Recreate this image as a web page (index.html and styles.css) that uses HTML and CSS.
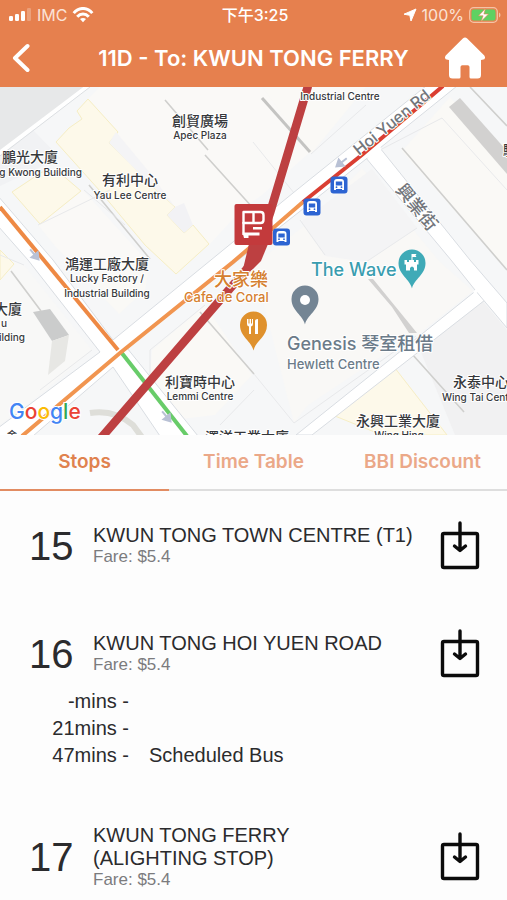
FILE: index.html
```html
<!DOCTYPE html>
<html lang="en">
<head>
<meta charset="utf-8">
<meta name="viewport" content="width=device-width, initial-scale=1">
<title>11D - To: KWUN TONG FERRY</title>
<link rel="stylesheet" href="styles.css">
</head>
<body>
<header class="header">
  <div class="status">
    <div class="status-left">
      <svg class="signal" width="23" height="14" viewBox="0 0 23 14" aria-hidden="true">
        <rect x="0" y="8" width="4" height="5" rx="1.3" fill="#fff"/>
        <rect x="6" y="6" width="4" height="7" rx="1.3" fill="#fff"/>
        <rect x="12" y="3" width="4" height="10" rx="1.3" fill="#fff"/>
        <rect x="18" y="0" width="4" height="13" rx="1.3" fill="#fff" opacity=".25"/>
      </svg>
      <span>IMC</span>
      <svg width="22" height="16" viewBox="0 0 22 16" aria-hidden="true" fill="none" stroke="#fff" stroke-width="3">
        <path d="M1.7 6.1C7-.1 15-.1 20.300 6.100"/>
        <path d="M5.200 9.700c3.400-3.700 8.200-3.700 11.600 0"/>
        <path d="M11 15.300l-3-3.200c1.700-1.600 4.300-1.600 6 0z" fill="#fff" stroke="none"/>
      </svg>
    </div>
    <div class="status-time">下午3:25</div>
    <div class="status-right">
      <svg width="14" height="14" viewBox="0 0 14 14" aria-hidden="true"><path d="M13 1 8 13 6.800 7.300 1 6.200z" fill="#fff" stroke="#fff" stroke-linejoin="round"/></svg>
      <span>100%</span>
      <svg width="32" height="16" viewBox="0 0 32 16" aria-hidden="true">
        <rect x=".7" y=".7" width="27.600" height="14.600" rx="4" fill="none" stroke="#f5c3a6" stroke-width="1.300"/>
        <rect x="2.500" y="2.500" width="24" height="11" rx="2.200" fill="#5fd162"/>
        <path d="M30 5.500v5c2-1 2-4 0-5z" fill="#f5c3a6"/>
        <path d="M16.500 1.500 9.500 8.800h4.600L12 14.500l7.500-7.500h-4.600z" fill="#fff" stroke="#e6804e" stroke-width=".6"/>
      </svg>
    </div>
  </div>
  <div class="navbar">
    <button class="back" type="button" aria-label="Back">
      <svg width="18" height="30" viewBox="0 0 18 30" aria-hidden="true"><path d="M15.500 3 3 15l12.500 12" fill="none" stroke="#fff" stroke-width="4" stroke-linecap="round" stroke-linejoin="round"/></svg>
    </button>
    <h1 class="title">11D - To: KWUN TONG FERRY</h1>
    <a class="home" href="#home" aria-label="Home">
      <svg width="42" height="42" viewBox="0 0 42 42" aria-hidden="true"><path d="M18.800 1.600q2.200-2 4.400 0L40.300 18.500q2.200 3.600-2 4.300L37 23v15q0 3.500-3.500 3.500H27q-1.500 0-1.500-1.500V30q0-1.800-1.800-1.800h-5.400q-1.800 0-1.800 1.800v10q0 1.500-1.500 1.500H8.500Q5 41.500 5 38V23l-1.300-.2q-4.200-.7-2-4.300z" fill="#fff"/></svg>
    </a>
  </div>
</header>

<main>
  <svg class="map" viewBox="0 87 507 348" role="img" aria-label="Route map">
    <defs>
      <g id="bus-stop">
        <rect x="-8.500" y="-8.500" width="17" height="17" rx="3" fill="#2d64d2"/>
        <path d="M-5 5V-3Q-5-6-2-6H2Q5-6 5-3V5H3V4H-3V5z" fill="#fff"/>
        <rect x="-3.200" y="-3.500" width="6.400" height="4" fill="#2d64d2"/>
        <circle cx="-2.500" cy="2.200" r=".9" fill="#2d64d2"/><circle cx="2.500" cy="2.200" r=".9" fill="#2d64d2"/>
      </g>
      <path id="pin" d="M0 19.500C-2 10-13.500 6-13.500-6a13.500 13.500 0 0 1 27 0C13.500 6 2 10 0 19.500z"/>
      <path id="arrow" d="M-6 0H1V-4L7 0 1 4V0"/>
    </defs>
    <rect y="87" width="507" height="348" fill="#f6f7f8"/>

    <g>
      <path d="M0 87H84L0 153z" fill="#e7e8e9"/>
      <path d="M36 128 0 157V186L60 158 33 130z" fill="#f1f2f4"/>
      <path d="M100 87H262L310 152 262 195 243 208 209 245 100 160 88 99z" fill="#faf9f7"/>
      <path d="M38 225 83 190 148 262 113 306 55 246z" fill="#faf9f7"/>
      <path d="M262 87H366L311 154z" fill="#faf9f6"/>
      <path d="M402 151 450 97 507 160V270z" fill="#faf9f6"/>
      <path d="M254 265 318 215 362 168 440 262 473 291 416 336 385 354 308 405 294 423z" fill="#f9f8f6"/>
      <path d="M301 222 372 169 417 228 366 262 325 256z" fill="#f4f4f5"/>
      <path d="M418 345 480 298 507 330V435H455z" fill="#f1f1f2"/>
      <path d="M0 257 24 265 92 350 45 391 0 425z" fill="#f8f8f7"/>
      <path d="M152 350 205 305 252 375 215 415 172 420 150 385z" fill="#faf9f6"/>
      <path d="M78 270 150 262 145 290 119 314z" fill="#faf9f6"/>
    </g>
    <g fill="#fdf9ea" stroke="#f6eec4" stroke-width="1">
      <path d="M88 99 118 132 109 143 130 163 150 184 175 207 167 215 184 233 193 225 209 244 176 274 145 245 100 191 56 142 69 128 82 119 77 111z"/>
      <path d="M12 192 42 172 60 173 81 191 40 224 33 216z"/>
      <path d="M391 363 447 435H382L330 414z"/>
      <path d="M0 250 14 264 0 280z"/>
    </g>
    <path d="M109 143 116 132 150 173 175 207 150 184z" fill="#f4f4f6"/>
    <path d="M175 207 184 203 193 225 184 233 167 215z" fill="#f2f2f5"/>
    <path d="M33 312 50 309 69 335 52 341z" fill="#cbcccc"/>
    <path d="M52 341 69 335 65 361 48 375z" fill="#e7e7e4"/>
    <path d="M449 107 460 98 507 151V174z" fill="#d2d1d0"/>
    <path d="M368 279 373 279 417 333 409 333 392 307z" fill="#d2d1d0"/>
    <path d="M90 413Q114 409 133 425L144 440" fill="none" stroke="#deded9" stroke-width="6"/>
    <g fill="none" stroke="#cfcfcd" stroke-width="1.600">
      <path d="M165 100 208 150M205 155 253 208M89 185 150 259M402 148 507 270M11 271 41 311M200 312 254 374M470 87 507 126M412 354 464 412"/>
    </g>
    <path d="M262 98 310 152" stroke="#c4c4c2" stroke-width="3"/>
    <g fill="none" stroke="#e8e9eb">
      <path d="M84 190 125 225M38 225 110 190M253 142 294 193M311 154 366 105M325 255 300 220M294 423 254 374M294 423 416 336M380 150 442 118 507 190M417 228 366 262M150 385 150 350 205 305M254 390 220 425M24 265 0 255M92 350 40 390"/>
    </g>

    <!-- roads -->
    <g fill="#fff" stroke="#d9dde2" stroke-width="1">
      <path d="M483 285 296 435H312L485 300z"/>
      <path d="M366 158 451 260 475 290 507 328V303L470 260 380 148z"/>
      <path d="M-2 196 53 260 113 340 293 193 426 86H457L380 148 127 348 198 436H160L113 367 33 436H-2V428L100 352 28 260-2 226z"/>
    </g>
    <path d="M88 86-2 154" stroke="#fff" stroke-width="4"/>
    <path d="M90 87 0 156" stroke="#dcdfe2"/>
    <path d="M367 157 381 148M474 293 485 284" stroke="#fff" stroke-width="3"/>

    <g fill="none" stroke-width="4">
      <path d="M0 207 118 350" stroke="#ee8944"/>
      <path d="M121 352 187 436" stroke="#68cc69"/>
      <path d="M22 436 120 353 233 262 273 228 303 202" stroke="#f19550"/>
      <path d="M303 202 363 154 443 86" stroke="#da3e32"/>
    </g>
    <g fill="#b9c1d5" stroke="#b9c1d5" stroke-width="2">
      <use href="#arrow" transform="translate(34 254) rotate(50)"/>
      <use href="#arrow" transform="translate(166 416) rotate(50)"/>
      <use href="#arrow" transform="translate(342 162) rotate(142)"/>
    </g>

    <path d="M308 86 270 213 252 263 101 438" fill="none" stroke="#bd4041" stroke-width="8.500" stroke-linejoin="round"/>
    <path d="M249 244H268L261 261 252 270 243 269z" fill="#bd4041"/>
    <rect x="234.500" y="204" width="38" height="41" rx="2" fill="#c33a3c"/>
    <g fill="none" stroke="#fff" stroke-width="2.400" stroke-linejoin="round">
      <path d="M243.500 212h17q3 0 3 3v5q0 3-3 3h-17zM253.500 212v11"/>
      <path d="M243.500 222v13"/>
    </g>
    <path d="M253 227h9v2.500h-9zM242.500 232.500h17v3h-11v2.500h-4.500z" fill="#fff"/>

    <use href="#bus-stop" transform="translate(339 185)"/>
    <use href="#bus-stop" transform="translate(312 207)"/>
    <use href="#bus-stop" transform="translate(281.500 237)"/>

    <use href="#pin" transform="translate(305 305)" fill="#748594"/>
    <circle cx="305" cy="300" r="5" fill="#fff"/>
    <use href="#pin" transform="translate(253.500 331)" fill="#df912d"/>
    <path d="M247 319v5q0 2 2 2.500V334h2v-7.500q2-.5 2-2.500v-5h-1v4.500h-1V319h-1.500v4.500h-1V319zM255 334v-13q0-2 3-2v15z" fill="#fff"/>
    <use href="#pin" transform="translate(412 269)" fill="#3faab7"/>
    <path d="M411.500 254h5l-1 1.500 1 1.500h-4v3h1.500v2h2v-2h2.500v4.500h-1.500v6h-3v-2.500q-2-3-4 0v2.500h-4v-6h-1.500V260h2.500v2h2v-2h2.500z" fill="#fff"/>

    <g class="label">
      <text x="200" y="126" class="zh">創貿廣場</text>
      <text x="200" y="139">Apec Plaza</text>
      <text x="30" y="162" class="zh">鵬光大廈</text>
      <text x="82" y="176" class="end">g Kwong Building</text>
      <text x="130" y="185" class="zh">有利中心</text>
      <text x="130" y="199">Yau Lee Centre</text>
      <text x="340" y="100">Industrial Centre</text>
      <text x="107" y="269" class="zh">鴻運工廠大廈</text>
      <text x="107" y="282">Lucky Factory /</text>
      <text x="107" y="297">Industrial Building</text>
      <text x="22" y="314" class="zh end">大廈</text>
      <text x="7" y="327" class="end">u</text>
      <text x="25" y="341" class="end">ilding</text>
      <text x="200" y="387" class="zh">利寶時中心</text>
      <text x="200" y="400">Lemmi Centre</text>
      <text x="453" y="387" class="zh start">永泰中心</text>
      <text x="442" y="401" class="start">Wing Tai Centre</text>
      <text x="398" y="426" class="zh">永興工業大廈</text>
      <text x="399" y="439">Wing Hing</text>
      <text x="247" y="442" class="zh">澤洋工業大廈</text>
      <text x="503" y="155" class="zh start">駿</text>
      <text x="7" y="439" class="start">金</text>
    </g>
    <g class="label road">
      <text transform="translate(359 156) rotate(-39)">Hoi Yuen Rd</text>
      <text transform="translate(395 190) rotate(51)" class="road-zh">興業街</text>
    </g>
    <g class="label place">
      <text x="311" y="276" class="place-name wave">The Wave</text>
      <text x="287" y="350" class="place-name">Genesis 琴室租借</text>
      <text x="287" y="369" class="place-sub">Hewlett Centre</text>
      <text x="214" y="286" class="place-name food">大家樂</text>
      <text x="184" y="302" class="place-sub food">Cafe de Coral</text>
    </g>
    <text x="9" y="419" class="google"><tspan fill="#4285f4">G</tspan><tspan fill="#ea4335">o</tspan><tspan fill="#fbbc05">o</tspan><tspan fill="#4285f4">g</tspan><tspan fill="#34a853">l</tspan><tspan fill="#ea4335">e</tspan></text>
  </svg>

  <div class="tabs" role="tablist">
    <button class="tab tab-active" type="button" role="tab" aria-selected="true">Stops</button>
    <button class="tab" type="button" role="tab" aria-selected="false">Time Table</button>
    <button class="tab" type="button" role="tab" aria-selected="false">BBI Discount</button>
  </div>

  <ul class="stops">
    <li class="stop">
      <div class="stop-head">
        <span class="stop-number">15</span>
        <div class="stop-info">
          <h2 class="stop-name">KWUN TONG TOWN CENTRE (T1)</h2>
          <p class="stop-fare">Fare: $5.4</p>
        </div>
        <button class="save" type="button" aria-label="Save stop 15">
          <svg width="40" height="50" viewBox="0 0 40 50" aria-hidden="true"><path d="M4 12.500h32q1.500 0 1.500 1.500v31q0 1.500-1.500 1.500H4q-1.500 0-1.500-1.500V14q0-1.500 1.500-1.500zM20 2v27M14.500 25l5.500 4.500 5.500-4.500" fill="none" stroke="#0b0b0b" stroke-width="3.400" stroke-linecap="round" stroke-linejoin="round"/></svg>
        </button>
      </div>
    </li>
    <li class="stop">
      <div class="stop-head">
        <span class="stop-number">16</span>
        <div class="stop-info">
          <h2 class="stop-name">KWUN TONG HOI YUEN ROAD</h2>
          <p class="stop-fare">Fare: $5.4</p>
        </div>
        <button class="save" type="button" aria-label="Save stop 16">
          <svg width="40" height="50" viewBox="0 0 40 50" aria-hidden="true"><path d="M4 12.500h32q1.500 0 1.500 1.500v31q0 1.500-1.500 1.500H4q-1.500 0-1.500-1.500V14q0-1.500 1.500-1.500zM20 2v27M14.500 25l5.500 4.500 5.500-4.500" fill="none" stroke="#0b0b0b" stroke-width="3.400" stroke-linecap="round" stroke-linejoin="round"/></svg>
        </button>
      </div>
      <ul class="arrivals">
        <li class="arrival"><span class="mins">-mins -</span></li>
        <li class="arrival"><span class="mins">21mins -</span></li>
        <li class="arrival"><span class="mins">47mins -</span><span>Scheduled Bus</span></li>
      </ul>
    </li>
    <li class="stop">
      <div class="stop-head">
        <span class="stop-number">17</span>
        <div class="stop-info">
          <h2 class="stop-name">KWUN TONG FERRY<br>(ALIGHTING STOP)</h2>
          <p class="stop-fare">Fare: $5.4</p>
        </div>
        <button class="save" type="button" aria-label="Save stop 17">
          <svg width="40" height="50" viewBox="0 0 40 50" aria-hidden="true"><path d="M4 12.500h32q1.500 0 1.500 1.500v31q0 1.500-1.500 1.500H4q-1.500 0-1.500-1.500V14q0-1.500 1.500-1.500zM20 2v27M14.500 25l5.500 4.500 5.500-4.500" fill="none" stroke="#0b0b0b" stroke-width="3.400" stroke-linecap="round" stroke-linejoin="round"/></svg>
        </button>
      </div>
    </li>
  </ul>
</main>
</body>
</html>
```
FILE: styles.css
```css
* {
  box-sizing: border-box;
}

body {
  margin: 0;
  background: #fdfdfd;
  color: #2b2b2d;
  font-family: "Liberation Sans", "Noto Sans CJK TC", sans-serif;
}

button {
  padding: 0;
  border: 0;
  background: none;
  font: inherit;
}

h1, h2, p, ul {
  margin: 0;
  padding: 0;
}

ul {
  list-style: none;
}

svg {
  display: block;
}

.header {
  background: #e6804e;
  color: #fff;
  font-family: Inter, "Noto Sans CJK TC", sans-serif;
}

.status {
  display: grid;
  grid-template-columns: 1fr auto 1fr;
  align-items: center;
  height: 30px;
  padding: 0 6px 0 9px;
  font-size: 16px;
  line-height: 20px;
}

.status-left,
.status-right {
  display: flex;
  align-items: center;
  gap: 5px;
  color: #fbe3d6;
}

.status-right {
  justify-content: flex-end;
}

.status-time {
  font-weight: 500;
}

.navbar {
  display: grid;
  grid-template-columns: 60px 1fr 60px;
  align-items: center;
  height: 57px;
  padding-bottom: 2px;
}

.back {
  justify-self: start;
  padding-left: 12px;
}

.title {
  font-size: 22px;
  font-weight: 600;
  line-height: 28px;
  text-align: center;
  white-space: nowrap;
}

.home {
  justify-self: end;
  padding-right: 21px;
}

.map {
  width: 100%;
  height: auto;
}

.label {
  font-family: Inter, "Noto Sans CJK TC", sans-serif;
  font-size: 10px;
  font-weight: 500;
  fill: #36383b;
  text-anchor: middle;
  stroke: #fff;
  stroke-width: 2px;
  stroke-linejoin: round;
  paint-order: stroke;
}

.zh {
  font-size: 14px;
}

.start {
  text-anchor: start;
}

.end {
  text-anchor: end;
}

.road {
  font-size: 16px;
  fill: #72767c;
  text-anchor: start;
}

.road-zh {
  font-size: 18px;
}

.place {
  fill: #6b7b89;
  text-anchor: start;
}

.place-name {
  font-size: 18px;
}

.place-sub {
  font-size: 13px;
}

.wave {
  fill: #3a9daf;
}

.food {
  fill: #d5802f;
}

.google {
  font-family: Inter, sans-serif;
  font-size: 21px;
  font-weight: 500;
  stroke: #fff;
  stroke-width: 2px;
  paint-order: stroke;
}

.tabs {
  display: grid;
  grid-template-columns: repeat(3, 1fr);
}

.tab {
  height: 56px;
  border-bottom: 2px solid #dedede;
  color: #eba888;
  font-family: Inter, sans-serif;
  font-size: 19px;
  font-weight: 600;
  line-height: 24px;
}

.tab-active {
  border-bottom-color: #e28c62;
  color: #e0824f;
}

.stop {
  padding: 28px 27px 27px 29px;
}

.stop:last-child {
  padding-bottom: 8px;
}

.stop-head {
  display: grid;
  grid-template-columns: 64px 1fr 40px;
  align-items: center;
  min-height: 53px;
}

.stop-number {
  font-size: 40px;
  line-height: 44px;
}

.stop-name {
  font-size: 20px;
  font-weight: 400;
  line-height: 23px;
}

.stop-fare {
  color: #7b7b7d;
  font-size: 17px;
  line-height: 20px;
}

.arrivals {
  margin-top: 8px;
}

.arrival {
  display: flex;
  gap: 20px;
  font-size: 20px;
  line-height: 27px;
}

.mins {
  width: 100px;
  text-align: right;
}
```
